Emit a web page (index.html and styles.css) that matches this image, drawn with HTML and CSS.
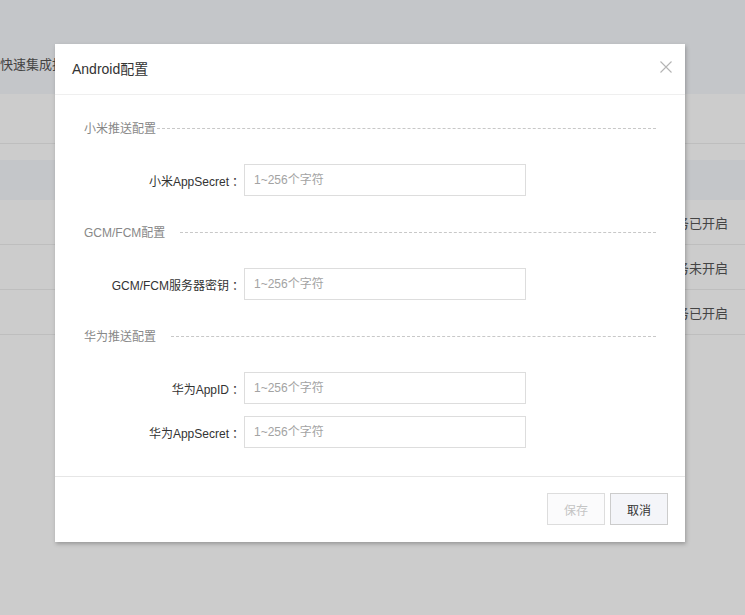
FILE: index.html
```html
<!DOCTYPE html>
<html lang="zh-CN">
<head>
<meta charset="utf-8">
<title>Android配置</title>
<link rel="stylesheet" href="styles.css">
</head>
<body>
<div class="page">
  <div class="page-head"><span class="page-title">快速集成指南</span></div>
  <div class="toolbar"></div>
  <div class="table">
    <div class="thead"></div>
    <div class="trow"><span class="status">服务已开启</span></div>
    <div class="trow"><span class="status">服务未开启</span></div>
    <div class="trow"><span class="status">服务已开启</span></div>
  </div>
</div>
<div class="mask"></div>
<div class="dialog">
  <div class="dialog-head">
    <span class="dialog-title">Android配置</span>
    <span class="close" aria-label="关闭">
      <svg width="12" height="12" viewBox="0 0 12 12"><path d="M0.5 0.5 L11.5 11.5 M11.5 0.5 L0.5 11.5" stroke="#b4b4b4" stroke-width="1.1" fill="none"/></svg>
    </span>
  </div>
  <div class="dialog-body">
    <div class="section">
      <div class="sec-title"><span class="sec-text">小米推送配置</span><span class="sec-line tight"></span></div>
      <div class="fields">
        <div class="field"><label class="label">小米AppSecret<span class="colon">：</span></label><input class="input" type="text" placeholder="1~256个字符"></div>
      </div>
    </div>
    <div class="section">
      <div class="sec-title"><span class="sec-text">GCM/FCM配置</span><span class="sec-line"></span></div>
      <div class="fields">
        <div class="field"><label class="label">GCM/FCM服务器密钥<span class="colon">：</span></label><input class="input" type="text" placeholder="1~256个字符"></div>
      </div>
    </div>
    <div class="section">
      <div class="sec-title"><span class="sec-text">华为推送配置</span><span class="sec-line"></span></div>
      <div class="fields">
        <div class="field"><label class="label">华为AppID<span class="colon">：</span></label><input class="input" type="text" placeholder="1~256个字符"></div>
        <div class="field"><label class="label">华为AppSecret<span class="colon">：</span></label><input class="input" type="text" placeholder="1~256个字符"></div>
      </div>
    </div>
  </div>
  <div class="dialog-foot">
    <button class="btn btn-disabled" type="button">保存</button>
    <button class="btn btn-cancel" type="button">取消</button>
  </div>
</div>
</body>
</html>
```
FILE: styles.css
```css
html, body {
  margin: 0;
  padding: 0;
}
body {
  width: 745px;
  height: 615px;
  overflow: hidden;
  position: relative;
  background: #ffffff;
  font-family: "Liberation Sans", "Noto Sans CJK SC", sans-serif;
  color: #333;
}
.page {
  display: flex;
  flex-direction: column;
}
.page-head {
  height: 94px;
  box-sizing: border-box;
  background: #f6f8fc;
  display: flex;
  align-items: flex-end;
  padding-bottom: 19px;
}
.page-title {
  white-space: nowrap;
  font-size: 13px;
  line-height: 20px;
  color: #555;
}
.toolbar {
  height: 49px;
  border-bottom: 1px solid #eeeeee;
}
.table {
  margin-top: 16px;
  display: flex;
  flex-direction: column;
}
.thead {
  height: 40px;
  background: #f6f8fc;
}
.trow {
  height: 44px;
  border-bottom: 1px solid #eeeeee;
  display: flex;
  align-items: center;
  justify-content: flex-end;
  padding-right: 17px;
}
.status {
  font-size: 13px;
  color: #555;
}
.mask {
  position: absolute;
  inset: 0;
  background: rgba(0, 0, 0, 0.2);
}
.dialog {
  position: absolute;
  left: 55px;
  top: 44px;
  width: 630px;
  background: #fff;
  box-shadow: 1px 2px 4px rgba(0, 0, 0, 0.25);
}
.dialog-head {
  position: relative;
  height: 50px;
  border-bottom: 1px solid #efefef;
  display: flex;
  align-items: center;
  padding-left: 17px;
}
.dialog-title {
  font-size: 14px;
  color: #333;
  line-height: 20px;
}
.close {
  position: absolute;
  right: 13px;
  top: 17px;
  width: 12px;
  height: 12px;
  display: block;
}
.close svg {
  display: block;
}
.dialog-body {
  padding: 24px 29px 28px;
  display: flex;
  flex-direction: column;
  gap: 27px;
}
.section {
  display: flex;
  flex-direction: column;
  gap: 25px;
}
.sec-title {
  display: flex;
  align-items: center;
  height: 20px;
}
.sec-text {
  font-size: 12px;
  color: #888;
  line-height: 20px;
}
.sec-line {
  flex: 1;
  border-top: 1px dashed #c8c8c8;
  margin-left: 15px;
  margin-top: -1px;
}
.sec-line.tight {
  margin-left: 1px;
}
.fields {
  display: flex;
  flex-direction: column;
  gap: 12px;
}
.field {
  display: flex;
  align-items: center;
}
.label {
  width: 160px;
  text-align: right;
  font-size: 12px;
  color: #333;
  white-space: nowrap;
}
.colon {
  padding-left: 3px;
}
.input {
  width: 282px;
  height: 32px;
  box-sizing: border-box;
  border: 1px solid #dddddd;
  padding: 0 9px;
  font-family: inherit;
  font-size: 12px;
  color: #333;
  outline: none;
  margin: 0;
}
.input::placeholder {
  color: #a3a3a3;
}
.dialog-foot {
  border-top: 1px solid #e6e6e6;
  padding: 16px 17px 17px;
  display: flex;
  justify-content: flex-end;
  gap: 5px;
}
.btn {
  width: 58px;
  height: 32px;
  box-sizing: border-box;
  font-family: inherit;
  font-size: 12px;
  margin: 0;
  padding: 0;
}
.btn-disabled {
  background: #fbfbfc;
  border: 1px solid #dddddd;
  color: #c4c4c4;
}
.btn-cancel {
  background: #f4f5f9;
  border: 1px solid #cccccc;
  color: #333;
}
```
